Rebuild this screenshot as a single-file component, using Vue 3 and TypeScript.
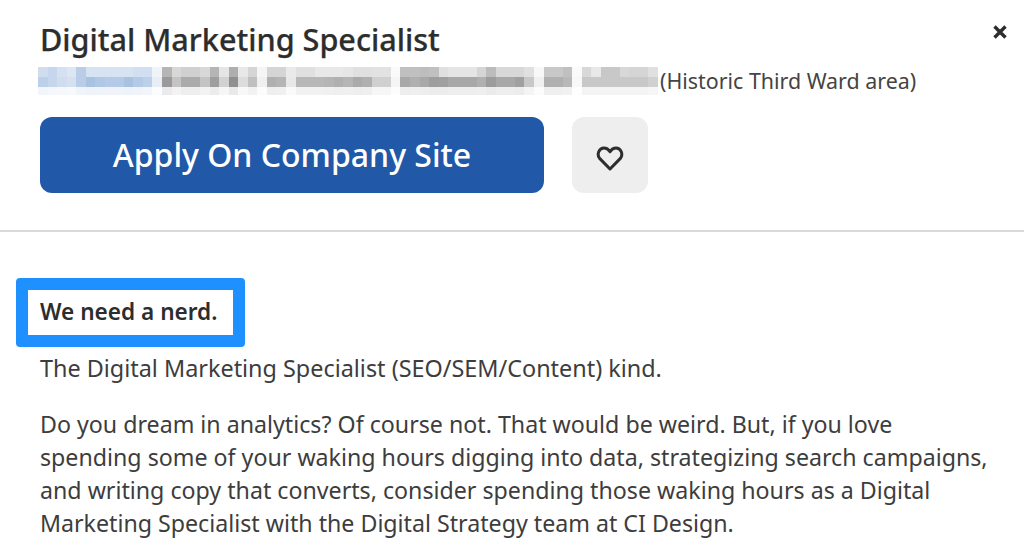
<script setup lang="ts">
const blueUpper = ['cfddef', 'c6d6ec', 'd5e1f1', 'dde7f3', 'b9cde6', 'd8e3f1', 'd8e3f1', 'd8e3f1', 'd8e3f1', 'd8e3f1', 'd2dff0', 'd2dff0', 'f0f3f8']
const blueLower = ['bdd0e9', 'c6d6ec', 'd0ddef', 'd5e1f1', 'b9cde6', 'a8c2e2', 'b0c7e5', 'b4cae6', 'b4cae6', 'a8c2e2', 'b4cae6', 'bdd0e9', 'e8eef6']
const grayUpper = 'b5 d8 d0 d0 d8 b5 e5 ae e8 d5 f5 d5 d5 ea e0 e0 e8 e8 e8 e6 e0 e0 e2 e2 fa c0 c0 bd c0 e0 e5 e5 e5 d5 bc d8 d8 d8 e0 f8 c8 c8 c0 fa d8 e8 c8 c8 d8 d5 d5 e0'.split(' ')
const grayLower = '9a c4 ab ab c4 9e d2 8f dc c0 f0 b0 b5 e8 b8 b8 b8 b5 b0 b5 aa b0 d0 d0 f5 a8 b0 a8 9e a0 a8 a8 a8 b0 9c a8 a8 a0 c8 f0 b0 b0 b8 f8 c8 c8 c8 c8 c8 c8 c8 d0'.split(' ')

const gray = (v: string) => v + v + v
const upper = [...blueUpper, ...grayUpper.map(gray)]
const lower = [...blueLower, ...grayLower.map(gray)]

// The faint third row is the lower row washed out towards white.
const wash = (hex: string) => {
  const parts = [0, 2, 4].map((i) => parseInt(hex.slice(i, i + 2), 16))
  return `rgb(${parts.map((c) => Math.round(c + (255 - c) * 0.8)).join(',')})`
}
// The grid fills column by column, so each column lists its three rows in turn.
const cells = upper.flatMap((c, i) => [`#${c}`, `#${lower[i]}`, wash(lower[i])])
</script>

<template>
  <main class="page">
    <header class="head">
      <button class="close" aria-label="Close">
        <svg width="16" height="16" viewBox="0 0 16 16"><path d="M2.5 2.5 L13.5 13.5 M13.5 2.5 L2.5 13.5" /></svg>
      </button>
      <h1>Digital Marketing Specialist</h1>
      <div class="loc">
        <div class="blur" aria-hidden="true">
          <i v-for="(c, i) in cells" :key="i" :style="{ background: c }"></i>
        </div>
        <span>(Historic Third Ward area)</span>
      </div>
      <div class="actions">
        <button class="apply">Apply On Company Site</button>
        <button class="save" aria-label="Save">
          <svg width="28" height="26" viewBox="0 0 28 26"><path d="M14 24 L3.6 13.4 C0.6 9.5 2.8 3 8 3 C10.6 3 12.6 4.6 14 6.8 C15.4 4.6 17.4 3 20 3 C25.2 3 27.4 9.5 24.4 13.4 Z" /></svg>
        </button>
      </div>
    </header>
    <section class="body">
      <div class="mark"><strong>We need a nerd.</strong></div>
      <p class="first">The Digital Marketing Specialist (SEO/SEM/Content) kind.</p>
      <p>Do you dream in analytics? Of course not. That would be weird. But, if you love spending some of your waking hours digging into data, strategizing search campaigns, and writing copy that converts, consider spending those waking hours as a Digital Marketing Specialist with the Digital Strategy team at CI Design.</p>
    </section>
  </main>
</template>

<style>
html, body { margin: 0; background: #fff; }
</style>

<style scoped>
.page { width: 1024px; height: 553px; overflow: hidden; font-family: "Noto Sans", sans-serif; color: #333; }
.head { position: relative; height: 232px; box-sizing: border-box; padding: 19px 40px 0; border-bottom: 2px solid #d9d9d9; }
.close { position: absolute; top: 24px; right: 16px; padding: 0; border: 0; background: none; line-height: 0; }
.close path { stroke: #2d2d2d; stroke-width: 3.4; fill: none; }
h1 { margin: 0; font-size: 30.6px; line-height: 40px; font-weight: 500; color: #2d2d2d; -webkit-text-stroke: 0.25px #2d2d2d; }
.loc { display: flex; align-items: center; gap: 2px; margin-left: -2px; margin-top: 4px; height: 34px; font-size: 21.4px; color: #444; }
.blur { width: 620px; height: 28px; margin-top: 2px; display: grid; grid-auto-flow: column; grid-template-rows: 10px 10px 8px; grid-template-columns: repeat(65, 1fr); filter: blur(0.4px); }
.actions { display: flex; gap: 28px; margin-top: 20px; }
.apply { width: 504px; height: 76px; border: 0; border-radius: 12px; background: #2158a8; color: #fff; font: 500 32px "Noto Sans", sans-serif; padding: 0 0 2px; }
.save { width: 76px; height: 76px; border: 0; border-radius: 12px; background: #eee; display: flex; align-items: center; justify-content: center; padding: 6px 0 0; }
.save path { fill: none; stroke: #2d2d2d; stroke-width: 3; stroke-linejoin: round; }
.body { padding: 46px 32px 0 40px; font-size: 23.2px; line-height: 33px; color: #3d3d3d; }
.mark { width: 229px; height: 69px; margin-left: -24px; box-sizing: border-box; border: 12px solid #1e90ff; border-radius: 4px; padding-left: 12px; line-height: 43px; }
strong { font-weight: 600; font-size: 22.6px; color: #2d2d2d; }
p { margin: 0; }
.first { margin-top: 5px; margin-bottom: 23px; font-size: 23.4px; }
</style>
